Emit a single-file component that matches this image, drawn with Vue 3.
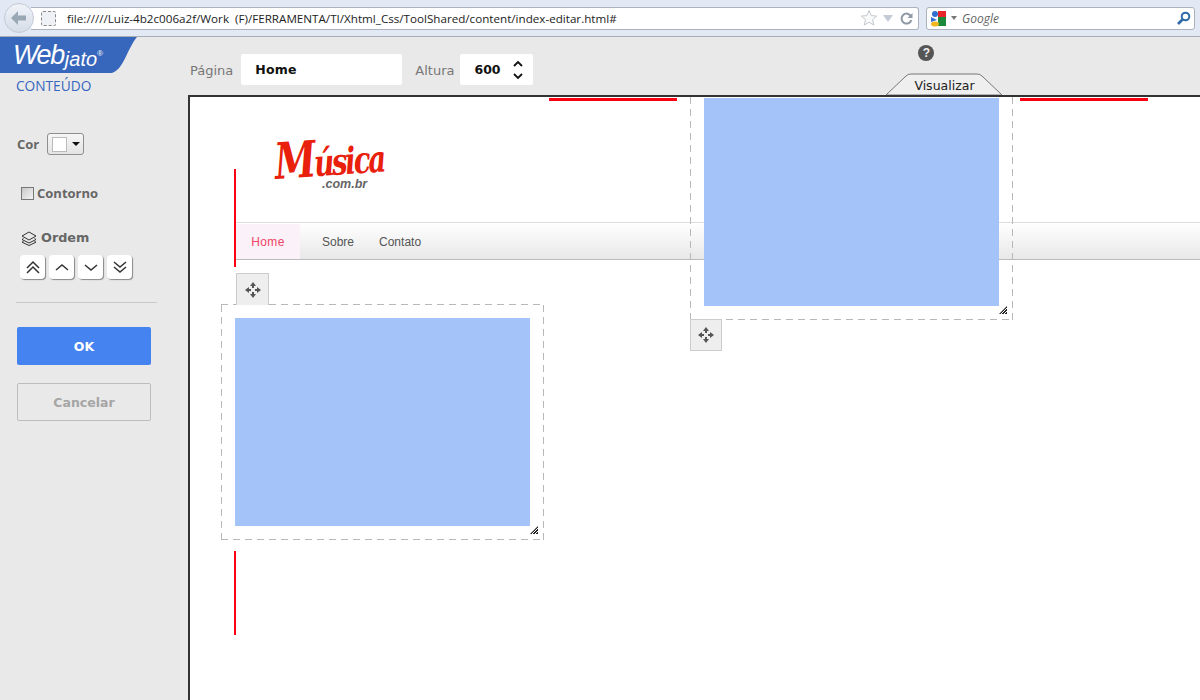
<script setup>
const orderButtons = [
  { name: 'top', paths: ['M4 11 L10 5 L16 11', 'M4 16 L10 10 L16 16'] },
  { name: 'up', paths: ['M4 13 L10 8 L16 13'] },
  { name: 'down', paths: ['M4 8 L10 13 L16 8'] },
  { name: 'bottom', paths: ['M4 5 L10 10 L16 5', 'M4 10 L10 15 L16 10'] }
]
const navItems = ['Sobre', 'Contato']
</script>

<template>
  <div class="window">
    <header class="browser">
      <div class="back">
        <svg width="20" height="18" viewBox="0 0 20 18"><path d="M9 2 L2 9 L9 16 L9 11.5 L17 11.5 L17 6.5 L9 6.5 Z" fill="#9aa7b5"/></svg>
      </div>
      <div class="url">
        <span class="favicon"></span>
        <span class="url-text">file://///Luiz-4b2c006a2f/Work&nbsp; (F)/FERRAMENTA/TI/Xhtml_Css/ToolShared/content/index-editar.html#</span>
        <svg class="star" width="18" height="18" viewBox="0 0 18 18"><path d="M9 1.5 L11.2 6.6 L16.7 7.1 L12.5 10.7 L13.8 16.1 L9 13.2 L4.2 16.1 L5.5 10.7 L1.3 7.1 L6.8 6.6 Z" fill="#fafafa" stroke="#c3c8ce"/></svg>
        <svg class="drop" width="10" height="7" viewBox="0 0 10 7"><path d="M0 0 H10 L5 7 Z" fill="#c4ccd6"/></svg>
        <svg class="reload" width="13" height="13" viewBox="0 0 13 13"><path d="M11 4.2 A5 5 0 1 0 11.4 8" fill="none" stroke="#8d99a6" stroke-width="2"/><path d="M12.5 1 V6 H7.5 Z" fill="#8d99a6"/></svg>
      </div>
      <div class="search">
        <svg class="g" width="17" height="17" viewBox="0 0 17 17">
          <rect x="8" y="1" width="8" height="6" fill="#e8262a"/>
          <rect x="8" y="7" width="8" height="9" fill="#1a8a3a"/>
          <circle cx="5" cy="4" r="3" fill="#2f6fd0"/>
          <path d="M1 7 L7 10 L1 12 Z" fill="#2f6fd0"/>
          <ellipse cx="5" cy="14" rx="4" ry="2.5" fill="#f2b61e"/>
        </svg>
        <svg class="drop-small" width="6" height="4" viewBox="0 0 6 4"><path d="M0 0 H6 L3 4 Z" fill="#777"/></svg>
        <span class="search-text">Google</span>
        <svg class="lens" width="15" height="15" viewBox="0 0 15 15"><circle cx="9.5" cy="5.5" r="3.8" fill="none" stroke="#2f6aa8" stroke-width="2"/><path d="M6.5 8.5 L2 13" stroke="#2f6aa8" stroke-width="2.6"/></svg>
      </div>
    </header>

    <div class="main">
      <aside class="sidebar">
        <div class="brand">
          <span class="brand-web">Web</span><span class="brand-jato">jato</span><span class="brand-reg">®</span>
        </div>
        <div class="section-title">CONTEÚDO</div>

        <div class="color-row">
          <span class="label">Cor</span>
          <div class="swatch-button">
            <span class="swatch"></span>
            <span class="caret"></span>
          </div>
        </div>

        <label class="outline-row">
          <span class="checkbox"></span>
          <span class="label">Contorno</span>
        </label>

        <div class="order-title">
          <svg width="16" height="15" viewBox="0 0 16 15" fill="none" stroke="#333" stroke-width="1">
            <path d="M8 1 L15 5 L8 9 L1 5 Z"/>
            <path d="M2.5 7.5 L1 8.5 L8 12 L15 8.5 L13.5 7.5"/>
            <path d="M2.5 10.5 L1 11.2 L8 14.5 L15 11.2 L13.5 10.5"/>
          </svg>
          <span class="label wide">Ordem</span>
        </div>
        <div class="order-buttons">
          <button v-for="b in orderButtons" :key="b.name" class="order-button">
            <svg width="20" height="20" viewBox="0 0 20 20" fill="none" stroke="#333" stroke-width="1.5">
              <path v-for="p in b.paths" :key="p" :d="p"/>
            </svg>
          </button>
        </div>

        <hr class="divider">

        <button class="btn primary">OK</button>
        <button class="btn ghost">Cancelar</button>
      </aside>

      <div class="content">
        <div class="toolbar">
          <span class="tool-label">Página</span>
          <div class="field page-field">Home</div>
          <span class="tool-label altura">Altura</span>
          <div class="field height-field">
            <span>600</span>
            <svg width="12" height="22" viewBox="0 0 12 22" fill="none" stroke="#111" stroke-width="1.8">
              <path d="M2 7 L6 3 L10 7"/>
              <path d="M2 15 L6 19 L10 15"/>
            </svg>
          </div>
          <div class="toolbar-right">
            <span class="help">?</span>
            <div class="tab">
              <svg class="tab-shape" width="118" height="22" viewBox="0 0 118 22">
                <path d="M1 22 L21 3 Q23 1 26 1 L92 1 Q95 1 97 3 L117 22 Z" fill="#efefef" stroke="#777"/>
              </svg>
              <span class="tab-text">Visualizar</span>
            </div>
          </div>
        </div>

        <div class="canvas">
          <div class="page">
            <div class="site-logo">
              <span class="site-name"><span class="site-initial">M</span>úsica</span>
              <span class="site-domain">.com.br</span>
            </div>
            <nav class="site-nav">
              <a class="nav-home">Home</a>
              <a v-for="item in navItems" :key="item" class="nav-link">{{ item }}</a>
            </nav>
          </div>

          <i class="guide h one"></i>
          <i class="guide h two"></i>
          <i class="guide v one"></i>
          <i class="guide v two"></i>

          <div class="block block-top">
            <div class="block-fill"></div>
            <svg class="resize" width="8" height="8" viewBox="0 0 8 8"><path d="M0 8 L8 0 V8 Z" fill="#222"/><path d="M2 8 L8 2 M5 8 L8 5" stroke="#fff"/></svg>
            <div class="handle below">
              <svg width="18" height="18" viewBox="0 0 18 18" fill="#555">
                <path d="M9 1 L12 5 H10 V7 H8 V5 H6 Z"/>
                <path d="M9 17 L12 13 H10 V11 H8 V13 H6 Z"/>
                <path d="M1 9 L5 6 V8 H7 V10 H5 V12 Z"/>
                <path d="M17 9 L13 6 V8 H11 V10 H13 V12 Z"/>
              </svg>
            </div>
          </div>

          <div class="block block-left">
            <div class="block-fill"></div>
            <svg class="resize" width="8" height="8" viewBox="0 0 8 8"><path d="M0 8 L8 0 V8 Z" fill="#222"/><path d="M2 8 L8 2 M5 8 L8 5" stroke="#fff"/></svg>
            <div class="handle above">
              <svg width="18" height="18" viewBox="0 0 18 18" fill="#555">
                <path d="M9 1 L12 5 H10 V7 H8 V5 H6 Z"/>
                <path d="M9 17 L12 13 H10 V11 H8 V13 H6 Z"/>
                <path d="M1 9 L5 6 V8 H7 V10 H5 V12 Z"/>
                <path d="M17 9 L13 6 V8 H11 V10 H13 V12 Z"/>
              </svg>
            </div>
          </div>
        </div>
      </div>
    </div>
  </div>
</template>

<style scoped>
.window {
  width: 1200px;
  height: 700px;
  overflow: hidden;
  display: flex;
  flex-direction: column;
  background: #e9e9e9;
  font-family: "DejaVu Sans", sans-serif;
}

/* browser chrome */
.browser {
  height: 36px;
  flex: none;
  display: flex;
  align-items: center;
  position: relative;
  padding: 0 5px 0 31px;
  background: #e2e9f4;
  border-bottom: 1px solid #a8adb3;
}
.back {
  position: absolute;
  left: 4px;
  top: 3px;
  width: 30px;
  height: 30px;
  border-radius: 50%;
  display: flex;
  align-items: center;
  justify-content: center;
  background: linear-gradient(#f0f3f8, #d6dde8);
  border: 1px solid #c3cad4;
  box-sizing: border-box;
  z-index: 1;
}
.url {
  width: 888px;
  height: 23px;
  box-sizing: border-box;
  display: flex;
  align-items: center;
  background: #fff;
  border: 1px solid #a9b2bd;
  border-left: none;
  border-radius: 0 3px 3px 0;
  padding-left: 10px;
}
.favicon {
  width: 13px;
  height: 13px;
  border: 1px dashed #888;
  border-radius: 2px;
  background: #eef1f6;
  flex: none;
}
.url-text {
  margin-left: 11px;
  font: 11.65px "Open Sans", sans-serif;
  color: #222;
  white-space: nowrap;
  flex: 1;
}
.star { margin-right: 5px; }
.drop { margin-right: 7px; }
.reload { margin-right: 5px; }
.search {
  margin-left: 7px;
  width: 269px;
  height: 23px;
  box-sizing: border-box;
  display: flex;
  align-items: center;
  background: #fff;
  border: 1px solid #a9b2bd;
  border-radius: 3px;
  padding: 0 3px 0 3px;
}
.drop-small { margin-left: 4px; }
.search-text {
  margin-left: 5px;
  font: italic 12px "Open Sans", sans-serif;
  color: #666;
  flex: 1;
}

.main {
  flex: 1;
  display: flex;
  min-height: 0;
}

/* left panel */
.sidebar {
  width: 188px;
  flex: none;
  box-sizing: border-box;
}
.brand {
  width: 137px;
  height: 36px;
  box-sizing: border-box;
  padding: 0 0 0 13px;
  background: #3766bd;
  clip-path: path('M0 0 H137 C127 12 124 32 112 36 H0 Z');
  color: #fff;
  white-space: nowrap;
  font-family: "Liberation Sans", sans-serif;
  font-style: italic;
  line-height: 34px;
}
.brand-web {
  font-size: 27px;
  letter-spacing: -1.4px;
}
.brand-jato {
  font-size: 20px;
  margin-left: 1px;
  position: relative;
  top: 2px;
}
.brand-reg {
  font-size: 8px;
  vertical-align: 8px;
}
.section-title {
  margin: 4px 0 0 16px;
  font: 13.7px/17px "Open Sans", sans-serif;
  color: #3566c0;
}
.label {
  font: bold 13px/16px "Open Sans", sans-serif;
  color: #666;
}
.label.wide {
  font-family: "DejaVu Sans", sans-serif;
  font-size: 12.8px;
}
.color-row {
  margin: 39px 0 0 17px;
  display: flex;
  align-items: center;
  height: 22px;
}
.swatch-button {
  margin-left: 8px;
  width: 37px;
  height: 22px;
  box-sizing: border-box;
  display: flex;
  align-items: center;
  padding-left: 4px;
  background: linear-gradient(#f6f6f6, #e4e4e4);
  border: 1px solid #8f8f8f;
  border-radius: 3px;
}
.swatch {
  width: 13px;
  height: 13px;
  background: #fff;
  border: 1px solid #bbb;
}
.caret {
  margin-left: 5px;
  border: 4px solid transparent;
  border-top: 4px solid #111;
  border-bottom: none;
}
.outline-row {
  margin: 31px 0 0 21px;
  display: flex;
  align-items: center;
  height: 14px;
}
.checkbox {
  width: 13px;
  height: 13px;
  box-sizing: border-box;
  background: linear-gradient(135deg, #c8c8c8, #f4f4f4);
  border: 1px solid #777;
  margin-right: 3px;
}
.order-title {
  margin: 30px 0 0 21px;
  height: 16px;
  display: flex;
  align-items: center;
  gap: 4px;
}
.order-buttons {
  margin: 9px 0 0 20px;
  display: flex;
  gap: 4px;
}
.order-button {
  width: 25px;
  height: 24px;
  padding: 0;
  display: flex;
  align-items: center;
  justify-content: center;
  background: #fff;
  border: none;
  border-radius: 4px;
  box-shadow: 1px 1px 1px #888;
}
.divider {
  margin: 23px 0 0 16px;
  width: 141px;
  height: 1px;
  border: none;
  background: #c8c8c8;
}
.btn {
  display: block;
  margin-left: 17px;
  width: 134px;
  height: 38px;
  padding: 0;
  border-radius: 2px;
  font: bold 12.5px "DejaVu Sans", sans-serif;
}
.primary {
  margin-top: 24px;
  background: #4583f0;
  border: none;
  color: #fff;
}
.ghost {
  margin-top: 18px;
  background: transparent;
  border: 1px solid #bdbdbd;
  color: #a5a5a5;
}

/* top tools */
.content {
  flex: 1;
  min-width: 0;
  display: flex;
  flex-direction: column;
}
.toolbar {
  height: 58px;
  flex: none;
  display: flex;
  align-items: flex-start;
  padding: 17px 0 0 2px;
  box-sizing: border-box;
}
.tool-label {
  font-size: 13px;
  line-height: 34px;
  color: #777;
}
.altura { margin-left: 13px; }
.field {
  height: 31px;
  box-sizing: border-box;
  display: flex;
  align-items: center;
  background: #fff;
  border-radius: 2px;
  font-size: 12.5px;
  font-weight: bold;
  color: #111;
  margin-left: 6px;
}
.page-field {
  width: 161px;
  padding-left: 14px;
  margin-left: 8px;
  letter-spacing: 0.2px;
}
.height-field {
  width: 73px;
  padding: 0 9px 0 14px;
  justify-content: space-between;
}
.toolbar-right {
  width: 118px;
  margin-left: 352px;
  margin-top: -9px;
  display: flex;
  flex-direction: column;
  align-items: flex-start;
}
.help {
  width: 16px;
  height: 16px;
  border-radius: 50%;
  background: #555;
  color: #eee;
  font: bold 12px/16px "Liberation Sans", sans-serif;
  text-align: center;
  margin-left: 33px;
}
.tab {
  position: relative;
  width: 118px;
  height: 22px;
  margin-top: 12px;
  text-align: center;
  font: 12.5px/26px "DejaVu Sans", sans-serif;
  color: #222;
}
.tab-shape {
  position: absolute;
  left: 0;
  top: 0;
}
.tab-text { position: relative; }

/* edited page */
.canvas {
  flex: 1;
  position: relative;
  overflow: hidden;
  background: #fff;
  border-top: 2px solid #333;
  border-left: 2px solid #333;
}
.page {
  padding: 41px 0 0 46px;
}
.site-logo {
  height: 84px;
  padding: 7px 0 0 40px;
  box-sizing: border-box;
  position: relative;
  color: #e8200c;
}
.site-name {
  display: block;
  font: italic bold 37px/33px "DejaVu Serif", serif;
  letter-spacing: -3px;
  transform: rotate(-4deg) scaleX(0.75);
  transform-origin: left bottom;
  white-space: nowrap;
}
.site-initial {
  font-size: 50px;
}
.site-domain {
  position: absolute;
  left: 86px;
  top: 40px;
  font: italic bold 12.5px/12px "Liberation Sans", sans-serif;
  color: #666;
}
.site-nav {
  height: 38px;
  box-sizing: border-box;
  display: flex;
  align-items: center;
  padding-top: 1px;
  background: linear-gradient(#fff, #e8e8e8);
  border-top: 1px solid #ddd;
  border-bottom: 1px solid #bbb;
  font: 12px "Liberation Sans", sans-serif;
  color: #555;
}
.nav-home {
  width: 64px;
  height: 100%;
  display: flex;
  align-items: center;
  justify-content: center;
  background: #fbf1f8;
  color: #ee4466;
  letter-spacing: 0.4px;
  margin-right: 22px;
}
.nav-link { margin-right: 25px; }
.guide {
  position: absolute;
  background: #fa0012;
}
.guide.h {
  top: 1px;
  width: 128px;
  height: 3px;
}
.guide.h.one { left: 359px; }
.guide.h.two { left: 830px; }
.guide.v {
  left: 44px;
  width: 2px;
}
.guide.v.one { top: 72px; height: 98px; }
.guide.v.two { top: 454px; height: 84px; }
.block {
  position: absolute;
  width: 323px;
  height: 236px;
  box-sizing: border-box;
  padding: 14px;
  background-image:
    repeating-linear-gradient(90deg, #b8b8b8 0 7px, transparent 7px 12px),
    repeating-linear-gradient(90deg, #b8b8b8 0 7px, transparent 7px 12px),
    repeating-linear-gradient(0deg, #b8b8b8 0 7px, transparent 7px 12px),
    repeating-linear-gradient(0deg, #b8b8b8 0 7px, transparent 7px 12px);
  background-size: 100% 1px, 100% 1px, 1px 100%, 1px 100%;
  background-position: 0 0, 0 100%, 0 0, 100% 0;
  background-repeat: no-repeat;
}
.block-top {
  left: 500px;
  top: -13px;
}
.block-left {
  left: 31px;
  top: 207px;
}
.block-fill {
  width: 295px;
  height: 208px;
  background: #a4c3f8;
}
.resize {
  position: absolute;
  left: 309px;
  bottom: 6px;
}
.handle {
  position: absolute;
  height: 32px;
  box-sizing: border-box;
  display: flex;
  align-items: center;
  justify-content: center;
  background: #eee;
  border: 1px solid #ccc;
}
.handle.below {
  width: 32px;
  left: 0;
  top: 100%;
  margin-top: -1px;
}
.handle.above {
  width: 33px;
  left: 15px;
  bottom: 100%;
  margin-bottom: -1px;
  border-bottom: none;
}
</style>

<style>
html, body {
  margin: 0;
  background: #e9e9e9;
}
</style>
